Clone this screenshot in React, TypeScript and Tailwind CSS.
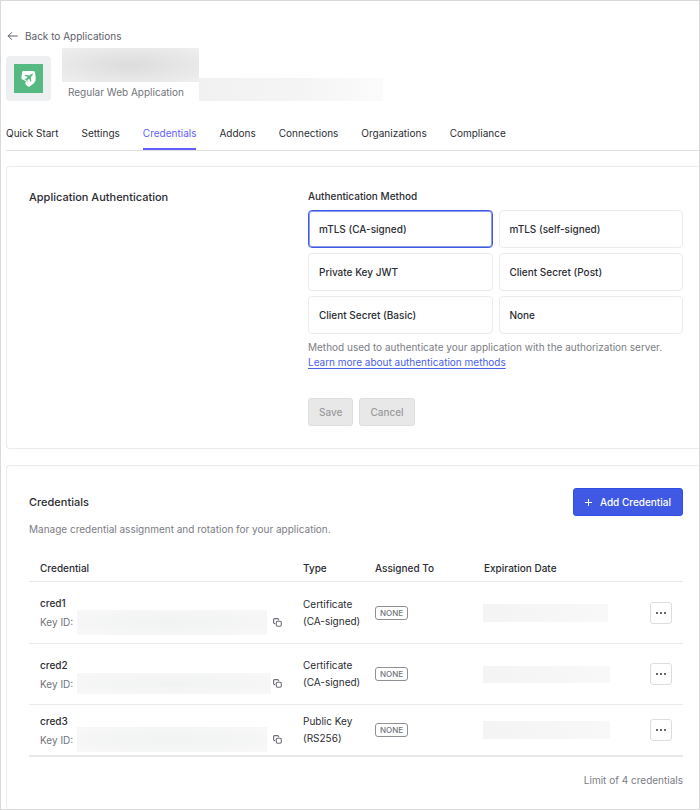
import type { ReactNode } from "react";

const tabs = ["Quick Start", "Settings", "Credentials", "Addons", "Connections", "Organizations", "Compliance"];

const methods = [
  "mTLS (CA-signed)",
  "mTLS (self-signed)",
  "Private Key JWT",
  "Client Secret (Post)",
  "Client Secret (Basic)",
  "None",
];

const credentials = [
  {
    name: "cred1",
    type: ["Certificate", "(CA-signed)"],
    height: "h-[62px]",
    border: "border-b border-[#ebebed]",
    keyMask: "ml-1 mr-1.5 h-[25px] w-[190px]",
    dateMask: "h-[18px] w-[125px]",
  },
  {
    name: "cred2",
    type: ["Certificate", "(CA-signed)"],
    height: "h-[61px]",
    border: "border-b border-[#ebebed]",
    keyMask: "ml-1 mr-0.5 h-[21px] w-[194px]",
    dateMask: "h-[17px] w-[127px]",
  },
  {
    name: "cred3",
    type: ["Public Key", "(RS256)"],
    height: "h-[52px]",
    border: "border-b-2 border-[#e8e8e9]",
    keyMask: "ml-1 mr-1.5 h-[25px] w-[190px]",
    dateMask: "h-[18px] w-[127px]",
  },
];

function ArrowLeft() {
  return (
    <svg className="size-3" viewBox="0 0 12 12" fill="none" stroke="#5d6068" strokeWidth="1" strokeLinecap="round" strokeLinejoin="round" aria-hidden="true">
      <path d="M11.300 6H2.200M5.600 2.600 2.200 6 5.600 9.400" />
    </svg>
  );
}

function AppLogo() {
  return (
    <svg className="size-[29px]" viewBox="0 0 29 29" aria-hidden="true">
      <rect width="29" height="29" fill="#56b982" />
      <path
        d="M9.500 7H19.200Q20.700 7 21 8.400L21.700 13.500Q22.100 17.500 19.700 19.600L15.600 22.600Q14.800 23.100 14.100 22.500L11.700 20.400Q11 19.700 11.400 18.800L12 17.300 8 15.200Q7.200 14.700 7.400 13.700L8.100 8.200Q8.400 7 9.500 7Z"
        fill="#fff"
      />
      <path
        d="M18.900 9.700Q17.600 9.600 16.400 10.700L15.400 11.500 11.100 10.700 10.500 11.400 13.600 13.100 12.100 14.800 10.700 14.700 10.300 15.200 12.200 16.100 13 18 13.500 17.500 13.500 16.100 15.200 14.700 16.600 17.900 17.300 17.300 16.900 13.100 17.900 12Q19 10.900 18.900 9.700Z"
        fill="#56b982"
      />
    </svg>
  );
}

function CopyIcon() {
  return (
    <svg className="size-[9px]" viewBox="0 0 9 9" fill="none" stroke="#6b6e76" strokeWidth="1.100" strokeLinejoin="round" aria-hidden="true">
      <rect x="3.300" y="3.300" width="5" height="5" rx="1.200" />
      <path d="M2.200 5.600H1.600Q.6 5.600.6 4.600V1.600Q.6.6 1.600.6H4.600Q5.600.6 5.600 1.600V2.200" />
    </svg>
  );
}

function Panel({ label, className, children }: { label: string; className: string; children: ReactNode }) {
  return (
    <section aria-label={label} className={`rounded-l border border-r-0 border-[#ebebed] pr-4 pl-[22px] ${className}`}>
      {children}
    </section>
  );
}

export default function App() {
  return (
    <div className="flex min-h-screen flex-col border border-[#d9d9da] bg-white pl-[5px] font-['Inter',sans-serif] text-[10px] leading-4 text-[#2b2d33]">
      <header>
        <a href="#" className="mt-[27px] flex w-fit items-center gap-[7px] text-[#5d6068]">
          <ArrowLeft />
          Back to Applications
        </a>
        <div className="flex items-start">
          <div className="mt-3 mr-[11px] flex size-[45px] items-center justify-center rounded bg-[#eeeff1]">
            <AppLogo />
          </div>
          <div className="mt-1 w-[137px]">
            <div className="h-[34px] bg-radial from-[#dcdcdc] to-[#efefef]" />
            <p className="pt-0.5 pl-1.5 text-[#71747b]">Regular Web Application</p>
          </div>
          <div className="mt-[34px] h-[23px] w-[184px] bg-linear-to-r from-[#f1f1f1] via-[#f4f4f4] to-[#fbfbfb]" />
        </div>
      </header>

      <nav aria-label="Application" className="mt-6 flex gap-[23px] border-b border-[#dedfe1]">
        {tabs.map((tab) => (
          <a
            key={tab}
            href="#"
            aria-current={tab === "Credentials" ? "page" : undefined}
            className="border-b-2 border-transparent pb-[7px] aria-[current=page]:border-[#635dff] aria-[current=page]:text-[#635dff]"
          >
            {tab}
          </a>
        ))}
      </nav>

      <Panel label="Application Authentication" className="mt-[15px] pt-[21px] pb-[22px]">
        <form className="grid grid-cols-[279px_1fr]">
          <h2 className="text-[11px] font-medium leading-[18px]">Application Authentication</h2>
          <div>
            <fieldset>
              <legend className="pb-1.5 font-medium">Authentication Method</legend>
              <div className="grid grid-cols-2 gap-x-1.5 gap-y-[5px]">
                {methods.map((method) => (
                  <label
                    key={method}
                    className="flex h-[38px] items-center rounded border border-[#ebebed] px-2.5 font-medium has-checked:border-[#3f59e4] has-checked:ring-1 has-checked:ring-[#3f59e4]/60 has-checked:ring-inset"
                  >
                    <input type="radio" name="method" defaultChecked={method === "mTLS (CA-signed)"} className="sr-only" />
                    {method}
                  </label>
                ))}
              </div>
            </fieldset>
            <p className="mt-1.5 leading-[15px] text-[#7b7d84]">
              Method used to authenticate your application with the authorization server.
            </p>
            <a href="#" className="block w-fit leading-[15px] text-[#4a61e8] underline underline-offset-2">
              Learn more about authentication methods
            </a>
            <div className="mt-7 flex gap-1.5 font-medium text-[#9a9b9d]">
              <button type="button" disabled className="h-7 rounded-[3px] border border-[#dedede] bg-[#e8e8e8] px-2.5">
                Save
              </button>
              <button type="button" disabled className="h-7 rounded-[3px] border border-[#dedede] bg-[#e8e8e8] px-2.5">
                Cancel
              </button>
            </div>
          </div>
        </form>
      </Panel>

      <Panel label="Credentials" className="mt-4 grow border-b-0 pt-[22px]">
        <div className="flex items-center justify-between">
          <h2 className="text-[11px] font-medium leading-[18px]">Credentials</h2>
          <button type="button" className="flex h-7 items-center gap-2 rounded-[3px] border border-[#2f4de4] bg-[#3f59e4] px-[11px] font-medium text-white">
            <svg className="size-[7px]" viewBox="0 0 7 7" stroke="#fff" strokeWidth="1" aria-hidden="true">
              <path d="M3.500 0v7M0 3.500h7" />
            </svg>
            Add Credential
          </button>
        </div>
        <p className="mt-[5px] text-[#7b7d84]">Manage credential assignment and rotation for your application.</p>
        <table className="mt-[17px] w-full table-fixed border-separate border-spacing-0 text-left">
          <thead>
            <tr className="h-[28px] *:border-b *:border-[#e6e6e8] *:pl-[11px] *:font-medium">
              <th className="w-[263px]">Credential</th>
              <th className="w-[72px]">Type</th>
              <th className="w-[109px]">Assigned To</th>
              <th>Expiration Date</th>
              <th className="w-[33px]" aria-label="Actions" />
            </tr>
          </thead>
          <tbody>
            {credentials.map((cred) => (
              <tr key={cred.name} className={cred.height}>
                <td className={`pl-[11px] ${cred.border}`}>
                  <div className="font-medium">{cred.name}</div>
                  <div className="mt-[3px] flex h-4 items-center text-[#71747b]">
                    Key ID:
                    <span className={`shrink-0 bg-radial from-[#f1f2f2] to-[#f8f8f8] ${cred.keyMask}`} />
                    <button type="button" aria-label="Copy key ID">
                      <CopyIcon />
                    </button>
                  </div>
                </td>
                <td className={`pl-[11px] leading-[17px] ${cred.border}`}>
                  {cred.type[0]}
                  <br />
                  {cred.type[1]}
                </td>
                <td className={`pl-[11px] ${cred.border}`}>
                  <span className="flex h-[14px] w-[33px] items-center justify-center rounded-[3px] border border-[#8d8f94] text-[8px] font-medium text-[#71747b]">
                    NONE
                  </span>
                </td>
                <td className={`pl-2.5 ${cred.border}`}>
                  <div className={`bg-linear-to-r from-[#f4f4f4] to-[#f8f8f8] ${cred.dateMask}`} />
                </td>
                <td className={cred.border}>
                  <button type="button" aria-label={`Actions for ${cred.name}`} className="flex size-[22px] items-center justify-center rounded-[3px] border border-[#dcdde0]">
                    <svg className="h-0.5 w-2.5" viewBox="0 0 10 2" fill="#34363c" aria-hidden="true">
                      <circle cx="1" cy="1" r="1" />
                      <circle cx="5" cy="1" r="1" />
                      <circle cx="9" cy="1" r="1" />
                    </svg>
                  </button>
                </td>
              </tr>
            ))}
          </tbody>
        </table>
        <p className="mt-[15px] text-right text-[#7b7d84]">Limit of 4 credentials</p>
      </Panel>
    </div>
  );
}
